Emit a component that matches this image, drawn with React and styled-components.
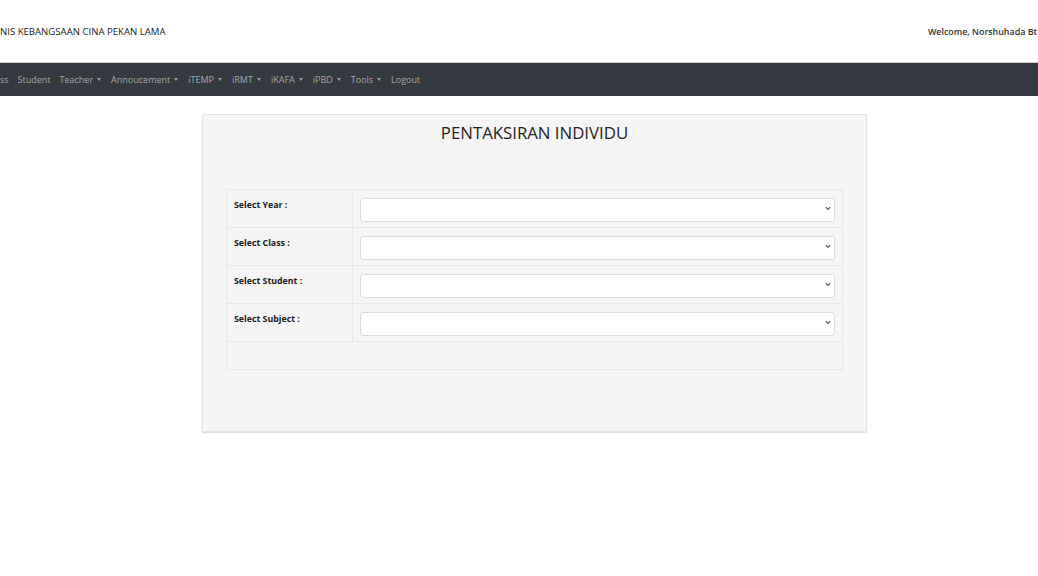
import React from "react";
import styled, { createGlobalStyle } from "styled-components";

const Global = createGlobalStyle`
  html, body { margin: 0; padding: 0; background: #fff; }
  body { font-family: "Open Sans", "Noto Sans", sans-serif; overflow: hidden; width: 1038px; height: 576px; }
  * { box-sizing: border-box; }
`;

const Header = styled.header`
  height: 63px;
  display: flex;
  align-items: center;
  justify-content: space-between;
  border-bottom: 1px solid #c8c8c8;
  white-space: nowrap;
  overflow: hidden;
`;

const Brand = styled.div`
  font-size: 9.6px;
  font-weight: 500;
  color: #222;
  padding-top: 1px;
`;

const Welcome = styled.div`
  font-size: 8.9px;
  font-weight: 600;
  color: #333;
  margin-right: 1px;
  padding-top: 1px;
`;

const Nav = styled.nav`
  height: 33px;
  background: #343a40;
  display: flex;
  align-items: center;
  gap: 9px;
  white-space: nowrap;
  overflow: hidden;
`;

const NavItem = styled.span`
  font-size: 9px;
  color: rgba(255, 255, 255, 0.55);
  display: inline-flex;
  align-items: center;
  gap: 3px;
`;

const Caret = styled.span`
  width: 0;
  height: 0;
  border-left: 2.5px solid transparent;
  border-right: 2.5px solid transparent;
  border-top: 3px solid rgba(255, 255, 255, 0.5);
  margin: 0 1px 0 1px;
`;

const Card = styled.section`
  margin: 18px 0 0 202px;
  width: 665px;
  height: 318px;
  background: #f5f5f5;
  border: 1px solid #e4e4e4;
  box-shadow: 0 1px 1px rgba(0, 0, 0, 0.12);
  padding: 0 23px;
`;

const Title = styled.h2`
  margin: 0;
  height: 74px;
  padding-top: 6px;
  text-align: center;
  font-size: 16.8px;
  font-weight: 400;
  color: #222;
`;

const Table = styled.div`
  border: 1px solid #e8e8e8;
  display: grid;
  grid-template-columns: 126px 1fr;
`;

const LabelCell = styled.div`
  height: 38px;
  padding: 9px 7px;
  font-size: 8.8px;
  font-weight: 700;
  color: #1a1a1a;
  border-right: 1px solid #e8e8e8;
  border-bottom: 1px solid #e8e8e8;
`;

const FieldCell = styled.div`
  height: 38px;
  padding: 6px 7px 0 7px;
  border-bottom: 1px solid #e8e8e8;
`;

const FooterRow = styled.div`
  grid-column: 1 / -1;
  height: 27px;
`;

const SelectWrap = styled.div`
  position: relative;
  height: 24px;
`;

const Select = styled.select`
  appearance: none;
  width: 100%;
  height: 24px;
  background: #fff;
  border: 1px solid #dcdcdc;
  border-radius: 3px;
  font-family: inherit;
  font-size: 9px;
`;

const Chevron = styled.svg`
  position: absolute;
  right: 4px;
  top: 10px;
  width: 6px;
  height: 5px;
  pointer-events: none;
`;

const rows = ["Select Year :", "Select Class :", "Select Student :", "Select Subject :"];
const navItems = [
  ["ss", false],
  ["Student", false],
  ["Teacher", true],
  ["Annoucement", true],
  ["iTEMP", true],
  ["iRMT", true],
  ["iKAFA", true],
  ["iPBD", true],
  ["Tools", true],
  ["Logout", false],
];

export default function App() {
  return (
    <>
      <Global />
      <Header>
        <Brand>NIS KEBANGSAAN CINA PEKAN LAMA</Brand>
        <Welcome>Welcome, Norshuhada Bt</Welcome>
      </Header>
      <Nav>
        {navItems.map(([label, dd]) => (
          <NavItem key={label}>
            {label}
            {dd && <Caret />}
          </NavItem>
        ))}
      </Nav>
      <Card>
        <Title>PENTAKSIRAN INDIVIDU</Title>
        <Table>
          {rows.map((r) => (
            <React.Fragment key={r}>
              <LabelCell>{r}</LabelCell>
              <FieldCell>
                <SelectWrap>
                  <Select defaultValue="">
                    <option value=""></option>
                  </Select>
                  <Chevron viewBox="0 0 6 5">
                    <path d="M0.8 1.2 L3 3.4 L5.2 1.2" fill="none" stroke="#555" strokeWidth="1.2" />
                  </Chevron>
                </SelectWrap>
              </FieldCell>
            </React.Fragment>
          ))}
          <FooterRow />
        </Table>
      </Card>
    </>
  );
}
